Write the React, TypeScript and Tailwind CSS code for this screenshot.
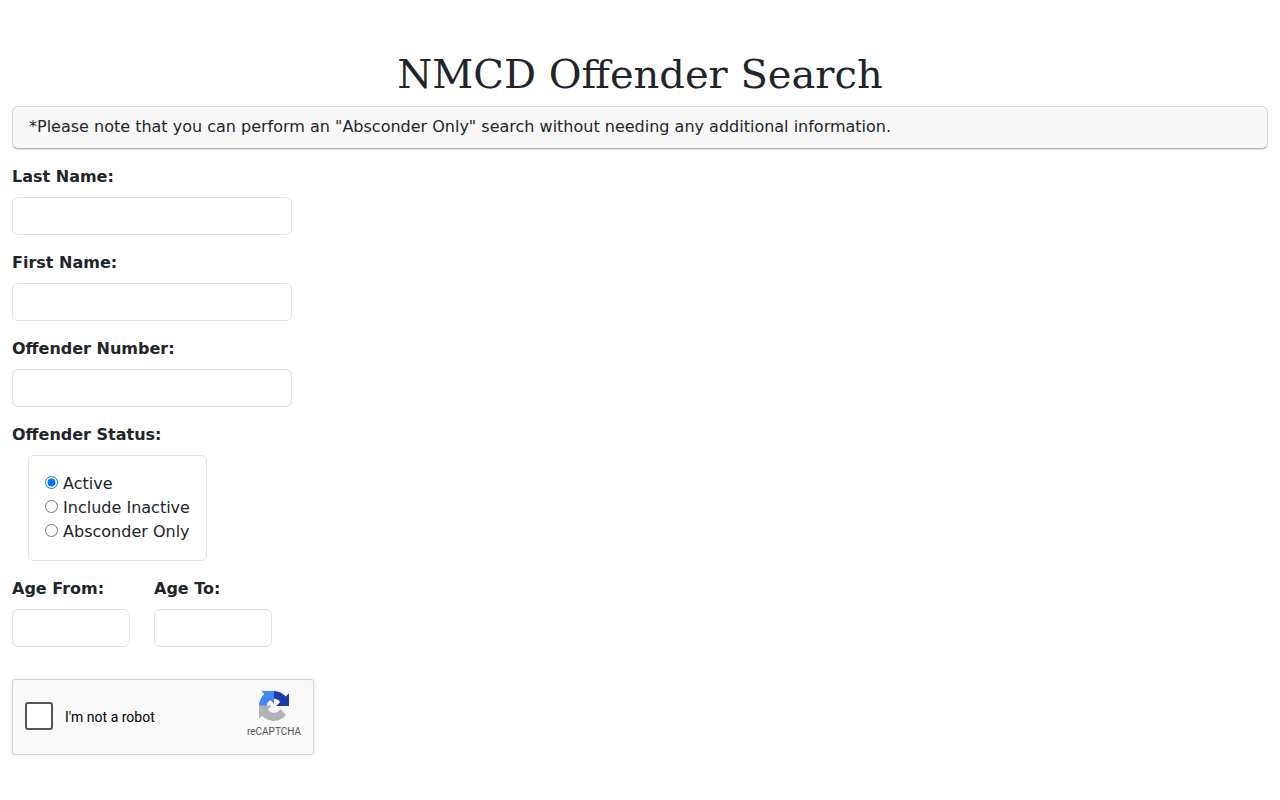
import React from 'react';

const FONT = 'font-["DejaVu_Sans",sans-serif]';

const Field = ({ label, widthClass = 'w-[280px]' }: { label: string; widthClass?: string }) => (
  <div className="flex flex-col">
    <label className="font-bold leading-6 mb-2">{label}</label>
    <input type="text" className={`${widthClass} h-[38px] bg-white border border-[#dee2e6] rounded-md outline-none`} />
  </div>
);

const RecaptchaLogo = () => (
  <svg width="30" height="30" viewBox="0 0 64 64">
    <path fill="#1c3aa9" d="M64 31.955l-.033-1.37V4.687l-7.16 7.16C50.948 4.674 42.033.093 32.05.093c-10.4 0-19.622 4.96-25.458 12.64l11.736 11.86a15.55 15.55 0 0 1 4.754-5.334c2.05-1.6 4.952-2.906 8.968-2.906.485 0 .86.057 1.137.163 4.976.393 9.29 3.14 11.83 7.125l-8.307 8.307 32.29.008" />
    <path fill="#4285f4" d="M31.862 0l-1.37.033H4.594l7.16 7.16C4.58 13.052 0 21.967 0 31.95c0 10.4 4.96 19.622 12.64 25.458L24.5 45.672a15.55 15.55 0 0 1-5.334-4.754c-1.6-2.05-2.906-4.952-2.906-8.968 0-.485.057-.86.163-1.137.393-4.976 3.14-9.29 7.125-11.83l8.307 8.307L31.862 0" />
    <path fill="#b2b2b2" d="M.001 31.955l.032 1.37v25.9l7.16-7.16c5.86 7.173 14.775 11.754 24.76 11.754 10.4 0 19.621-4.96 25.457-12.64L45.675 38.32a15.55 15.55 0 0 1-4.754 5.334c-2.05 1.6-4.95 2.906-8.966 2.906-.485 0-.86-.057-1.137-.163-4.976-.393-9.29-3.14-11.83-7.125l8.307-8.307-32.29.008" />
  </svg>
);

export default function App() {
  return (
    <div className={`${FONT} min-h-[800px] bg-white text-[#212529] text-base leading-6 px-3 pt-[50px] pb-[45px]`}>
      <h1 className='font-["DejaVu_Serif",serif] text-[40px] leading-[48px] font-normal text-center mb-2'>NMCD Offender Search</h1>

      <div className="h-[43px] px-4 pt-2 bg-[#f8f8f8] border border-[#d5d5d5] border-b-[#b0b0b0] rounded-md shadow-[0_1px_1px_rgba(0,0,0,0.1)] mb-4">
        *Please note that you can perform an "Absconder Only" search without needing any additional information.
      </div>

      <div className="flex flex-col gap-4">
        <Field label="Last Name:" />
        <Field label="First Name:" />
        <Field label="Offender Number:" />

        <div>
          <div className="font-bold leading-6 mb-2">Offender Status:</div>
          <div className="ml-4 w-[179px] p-4 border border-[#dee2e6] rounded-md">
            <div><input type="radio" name="status" defaultChecked className="mr-[5px]" /> <span className="-ml-[5px]">Active</span></div>
            <div><input type="radio" name="status" className="mr-[5px]" /> <span className="-ml-[5px]">Include Inactive</span></div>
            <div><input type="radio" name="status" className="mr-[5px]" /> <span className="-ml-[5px]">Absconder Only</span></div>
          </div>
        </div>

        <div className="flex gap-6">
          <Field label="Age From:" widthClass="w-[118px]" />
          <Field label="Age To:" widthClass="w-[118px]" />
        </div>
      </div>

      <div className="mt-8 w-[302px] h-[76px] flex items-center bg-[#f9f9f9] border border-[#d3d3d3] rounded-[3px] shadow-[0_0_4px_1px_rgba(0,0,0,0.08)] pl-3 pr-3 font-['Roboto',sans-serif]">
        <div className="w-7 h-7 mb-[2px] bg-white border-2 border-[#555555] rounded-[3px]" />
        <span className="ml-3 text-sm text-black">I'm not a robot</span>
        <div className="ml-auto flex flex-col items-center self-start pt-[11px]">
          <RecaptchaLogo />
          <span className="text-[10px] leading-[10px] mt-[6px] text-[#555555]">reCAPTCHA</span>
        </div>
      </div>
    </div>
  );
}
